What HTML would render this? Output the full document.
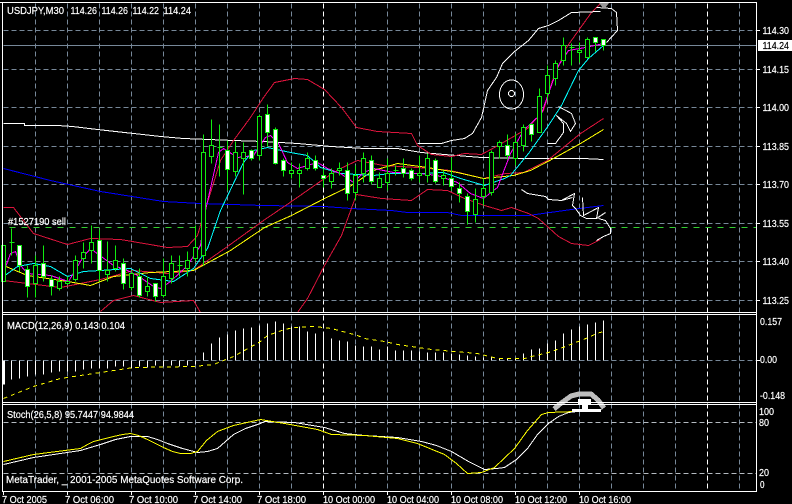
<!DOCTYPE html>
<html><head><meta charset="utf-8"><title>USDJPY,M30</title>
<style>
html,body{margin:0;padding:0;background:#000;width:792px;height:504px;overflow:hidden}
svg{display:block}
text{font-family:"Liberation Sans",sans-serif;font-size:10.5px;fill:#fff;stroke:#fff;stroke-width:.2}
path,polyline,ellipse,circle{fill:none}
polyline{stroke-linejoin:miter}
</style></head><body>
<svg width="792" height="504" viewBox="0 0 792 504" xmlns="http://www.w3.org/2000/svg">
<rect width="792" height="504" fill="#000"/>
<g transform="translate(.5,.5)" shape-rendering="crispEdges">
<!-- grid -->
<path stroke="#778899" stroke-dasharray="5 3" d="M35 3V491M67 3V491M99 3V491M131 3V491M163 3V491M195 3V491M227 3V491M259 3V491M291 3V491M355 3V491M387 3V491M419 3V491M451 3V491M483 3V491M515 3V491M547 3V491M579 3V491M611 3V491M643 3V491M675 3V491M739 3V491"/>
<path stroke="#fff" stroke-dasharray="5 3" d="M323 3V491M707 3V491"/>
<path stroke="#778899" stroke-dasharray="5 3" d="M3 30H756M3 69H756M3 107H756M3 146H756M3 184H756M3 223H756M3 261H756M3 300H756M3 360H756"/>
<path stroke="#b4bac0" stroke-dasharray="5 3" d="M3 422H756M3 473H756"/>
<path stroke="#778899" d="M3 45H756"/>
<path stroke="#32cd32" stroke-dasharray="6 6" d="M9 227H756"/>

<!-- indicators main -->
<polyline stroke="#fff" points="3,123 24,123 24,125 57,125 72,126 97,129 133,133 160,136 183,138 233,140 263,141 297,143 331,146 364,148 397,148 421,152 444,154 481,157 528,158 583,158 603,159"/>
<polyline stroke="#0000ff" points="3,168 50,180 100,191 163,201 200,203 263,205 324,206 351,208 391,210 407,212 447,212 461,215 528,215 571,209 603,205"/>
<polyline stroke="#dc143c" points="3,207 13,207 33,233 67,244 90,238 120,239 167,247 187,246 197,235 202,218 220,160 233,140 250,117 263,97 274,82 294,78 307,79 324,89 341,107 356,127 377,131 411,133 417,145 431,154 451,156 464,153 481,154 494,147 527,128 543,110 552,80 566,47 578,30 591,12 600,3"/>
<polyline stroke="#dc143c" points="100,311 113,300 133,295 160,302 193,300 200,312"/>
<polyline stroke="#dc143c" points="297,312 307,298 324,265 341,235 356,194 381,198 411,200 427,189 447,190 464,198 484,205 501,210 511,207 528,213 538,218 558,236 571,243 588,245 600,239"/>
<polyline stroke="#dc143c" points="3,280 27,283 60,287 100,279 133,270 167,273 193,270 227,246 263,220 291,201 324,178 340,168 357,160 383,165 417,167 450,170 483,178 505,173 523,172 547,160 580,133 603,118"/>
<polyline stroke="#ffff00" points="3,265 27,275 67,281 90,285 113,276 150,272 193,270 230,250 264,227 291,215 324,198 351,185 373,170 397,163 427,167 457,172 483,178 513,175 530,170 553,158 580,143 603,129"/>
<polyline stroke="#00ffff" points="3,276 17,266 33,263 50,266 67,276 83,271 100,270 130,268 150,278 173,281 193,268 207,248 220,210 243,162 253,150 267,147 290,152 307,155 320,167 340,173 373,175 390,173 420,173 443,172 460,178 484,185 504,178 510,175 528,153 548,125 561,105 578,70 588,58 603,45"/>
<polyline stroke="#ff00ff" points="3,272 10,253 15,251 20,265 27,273 50,275 68,281 83,256 90,248 113,265 127,270 137,275 153,286 160,288 170,281 187,265 200,245 205,210 218,152 223,148 237,157 253,155 265,137 270,135 278,143 287,162 297,168 317,162 327,168 340,173 353,182 363,172 373,168 393,172 420,173 437,175 457,182 470,193 483,198 493,190 497,187 510,153 523,130 541,113 548,93 558,65 568,50 585,47 603,43"/>

<!-- candle wicks -->
<path stroke="#10ec10" d="M11 228V255M19 245V271M27 265V297M35 255V297M43 245V281M51 275V295M59 276V290M67 276V284M75 255V281M83 242V268M91 225V263M99 229V281M107 241V281M115 245V271M123 258V289M131 270V290M139 268V297M147 276V296M155 283V301M163 258V297M171 255V283M179 255V276M187 251V276M195 225V261M203 134V265M211 119V163M219 124V176M227 140V190M235 141V176M243 142V194M251 149V160M259 114V160M267 104V146M275 127V164M283 158V176M291 162V178M299 163V187M307 152V170M315 155V170M323 168V187M331 168V188M339 162V175M347 162V200M355 165V200M363 152V182M371 155V184M379 172V187M387 158V190M395 165V175M403 158V177M411 168V180M419 155V182M427 153V182M435 158V183M443 170V185M451 157V190M459 182V202M467 193V224M475 188V222M483 178V205M491 150V195M499 140V158M507 134V159M515 133V165M523 124V151M531 123V141M539 88V132M547 65V100M555 60V85M563 37V65M571 43V65M579 42V62M587 37V58M595 37V51M603 39V50"/>
<!-- dojis -->
<path stroke="#10ec10" d="M9 242h5M177 265h5M217 147h5M393 170h5M569 47h5"/>
<!-- hollow bodies -->
<path stroke="#10ec10" style="fill:#000" d="M1 245h4V281H1zM33 265h4V283H33zM57 281h4V288H57zM65 281h4V283H65zM73 260h4V279H73zM81 252h4V258H81zM89 242h4V250H89zM105 270h4V274H105zM113 260h4V268H113zM129 273h4V287H129zM145 286h4V291H145zM161 276h4V295H161zM169 263h4V278H169zM185 260h4V268H185zM193 247h4V258H193zM201 152h4V255H201zM209 145h4V156H209zM233 152h4V171H233zM241 152h4V158H241zM257 116h4V155H257zM289 170h4V173H289zM297 170h4V173H297zM305 158h4V168H305zM329 173h4V181H329zM337 168h4V170H337zM353 175h4V192H353zM361 158h4V173H361zM377 178h4V187H377zM385 173h4V182H385zM417 173h4V175H417zM425 158h4V175H425zM441 175h4V178H441zM473 199h4V214H473zM481 188h4V196H481zM489 152h4V192H489zM497 142h4V146H497zM513 142h4V158H513zM521 127h4V145H521zM537 96h4V132H537zM545 75h4V93H545zM553 63h4V78H553zM561 45h4V60H561zM577 50h4V52H577zM585 39h4V57H585z"/>
<!-- white bodies -->
<path stroke="#10ec10" style="fill:#fff" d="M17 245h4V265H17zM25 269h4V286H25zM41 263h4V276H41zM49 279h4V286H49zM97 240h4V270H97zM121 263h4V283H121zM137 276h4V295H137zM153 283h4V296H153zM225 150h4V169H225zM249 150h4V158H249zM265 114h4V132H265zM273 129h4V163H273zM281 160h4V170H281zM313 160h4V168H313zM321 175h4V178H321zM345 170h4V193H345zM369 160h4V181H369zM401 168h4V173H401zM409 170h4V178H409zM433 160h4V181H433zM449 178h4V186H449zM457 188h4V193H457zM465 196h4V211H465zM505 145h4V155H505zM529 124h4V134H529zM593 37h4V42H593zM601 39h4V45H601z"/>

<!-- MACD bars -->
<path stroke="#fff" d="M3 360V384M4 360V384M11 360V379M19 360V378M27 360V376M35 360V374M43 360V374M51 360V372M59 360V371M67 360V371M75 360V371M83 360V369M91 360V368M99 360V368M107 360V368M115 360V366M123 360V366M131 360V368M139 360V366M147 360V367M155 360V365M163 360V366M171 360V365M179 360V366M187 360V365M195 360V364M203 360V352M211 360V343M219 360V337M227 360V334M235 360V330M243 360V328M251 360V327M259 360V325M267 360V323M275 360V321M283 360V323M291 360V326M299 360V326M307 360V331M315 360V333M323 360V335M331 360V338M339 360V340M347 360V341M355 360V345M363 360V346M371 360V346M379 360V349M387 360V346M395 360V350M403 360V350M411 360V350M419 360V351M427 360V352M435 360V352M443 360V352M451 360V353M459 360V354M467 360V355M475 360V356M483 360V357M491 360V357M499 360V358M507 360V358M515 360V358M523 360V353M531 360V349M539 360V348M547 360V343M555 360V340M563 360V333M571 360V329M579 360V326M587 360V324M595 360V322M603 360V320"/>
<polyline stroke="#ffff00" stroke-dasharray="4 4" points="3,398 33,386 60,378 100,372 133,367 193,366 213,364 233,356 260,341 267,335 284,329 294,327 314,326 331,328 357,335 364,338 384,341 397,344 431,349 477,353 497,358 524,358 531,356 548,352 565,346 588,337 596,333 603,331"/>

<!-- Stoch -->
<polyline stroke="#fff" points="3,464 33,457 80,450 100,444 115,439 130,436 147,436 157,439 167,443 182,448 197,452 207,451 217,448 225,441 233,434 245,428 260,423 264,421 294,422 324,427 344,433 364,435 397,437 421,441 436,445 451,451 468,461 484,469 496,468 504,467 516,459 527,448 537,434 548,423 558,416 568,412 585,410 601,409"/>
<polyline stroke="#ffff00" points="3,461 33,454 80,448 87,444 93,441 113,436 122,434 130,433 138,435 147,439 163,447 172,451 180,453 190,453 197,451 206,440 217,431 233,425 260,419 284,423 317,429 331,434 364,435 397,438 417,443 444,454 456,463 467,473 481,472 494,467 514,448 527,430 541,414 548,412 575,411 598,409"/>

<!-- hand-drawn shark -->
<polyline stroke="#fff" points="417,143 441,143 451,140 464,138 472,133 481,117 487,90 496,77 502,63 514,51 528,40 538,28 548,25 558,20 571,12 600,11"/>
<polyline stroke="#fff" points="596,7 611,8 616,12 617,30 606,42"/>
<ellipse stroke="#fff" cx="511" cy="94" rx="12" ry="14.5"/>
<circle stroke="#fff" cx="511" cy="93" r="3"/>
<polyline stroke="#fff" points="558,106 571,113 575,123 570,131 566,123 556,115 563,123 563,132 555,143 547,143"/>
<polyline stroke="#fff" points="521,189 527,193 545,196 548,199 561,200 574,193 572,205 575,208 580,215 586,218 596,218 598,207 583,215 582,197"/>
<polyline stroke="#fff" points="561,200 572,197"/>
<polyline stroke="#fff" points="596,218 605,212"/>
<polyline stroke="#fff" points="598,218 605,220 610,228 610,233 603,236 596,240"/>
</g>
<path d="M599 3h10l-4 5h-2z" style="fill:#999"/>

<g shape-rendering="crispEdges">
<path d="M554 409L560 404L571 396L579 394L591 394L598 400L604 408" stroke="#bdbdbd" stroke-width="5"/>
<path d="M578 399h13v6h-3v5h-6v-5h-4zM572 409h29v3h-29z" style="fill:#fff"/>
<!-- frame -->
<path stroke="#fff" d="M0 2.5H756.5M2.5 2V491.5M756.5 2V491.5M2 312.5H756M2 314.5H756M2 402.5H756M2 404.5H756M2 491.5H757"/>
<path stroke="#fff" d="M757 30.5h3M757 69.5h3M757 107.5h3M757 146.5h3M757 184.5h3M757 223.5h3M757 261.5h3M757 300.5h3M757 360.5h3"/>
<path stroke="#fff" d="M3.5 492v3M67.5 492v3M131.5 492v3M195.5 492v3M259.5 492v3M323.5 492v3M387.5 492v3M451.5 492v3M515.5 492v3M579.5 492v3"/>
<rect x="758" y="40" width="34" height="11" fill="#fff"/>
</g>

<text x="7" y="14" textLength="57" lengthAdjust="spacingAndGlyphs">USDJPY,M30</text>
<text x="70.5" y="14" textLength="26.5" lengthAdjust="spacingAndGlyphs">114.26</text>
<text x="101.5" y="14" textLength="26.5" lengthAdjust="spacingAndGlyphs">114.26</text>
<text x="132.5" y="14" textLength="26.5" lengthAdjust="spacingAndGlyphs">114.22</text>
<text x="163.5" y="14" textLength="27.5" lengthAdjust="spacingAndGlyphs">114.24</text>
<text x="8" y="225" textLength="58" lengthAdjust="spacingAndGlyphs">#1527190 sell</text>
<text x="7" y="329" textLength="118" lengthAdjust="spacingAndGlyphs">MACD(12,26,9) 0.143 0.104</text>
<text x="7" y="418" textLength="127" lengthAdjust="spacingAndGlyphs">Stoch(26,5,8) 95.7447 94.9844</text>
<text x="6" y="483" textLength="237" lengthAdjust="spacingAndGlyphs">MetaTrader, _ 2001-2005 MetaQuotes Software Corp.</text>

<text x="762.5" y="34" textLength="26.5" lengthAdjust="spacingAndGlyphs">114.30</text>
<text x="762.5" y="49" textLength="26.5" lengthAdjust="spacingAndGlyphs" style="fill:#000;stroke:#000">114.24</text>
<text x="762.5" y="73" textLength="26.5" lengthAdjust="spacingAndGlyphs">114.15</text>
<text x="762.5" y="111" textLength="26.5" lengthAdjust="spacingAndGlyphs">114.00</text>
<text x="762.5" y="150" textLength="26.5" lengthAdjust="spacingAndGlyphs">113.85</text>
<text x="762.5" y="188" textLength="26.5" lengthAdjust="spacingAndGlyphs">113.70</text>
<text x="762.5" y="227" textLength="26.5" lengthAdjust="spacingAndGlyphs">113.55</text>
<text x="762.5" y="265" textLength="26.5" lengthAdjust="spacingAndGlyphs">113.40</text>
<text x="762.5" y="304" textLength="26.5" lengthAdjust="spacingAndGlyphs">113.25</text>
<text x="760" y="325" textLength="22" lengthAdjust="spacingAndGlyphs">0.157</text>
<text x="760" y="363" textLength="17" lengthAdjust="spacingAndGlyphs">0.00</text>
<text x="760" y="399" textLength="25" lengthAdjust="spacingAndGlyphs">-0.148</text>
<text x="759" y="415" textLength="15" lengthAdjust="spacingAndGlyphs">100</text>
<text x="759" y="426" textLength="10" lengthAdjust="spacingAndGlyphs">80</text>
<text x="759" y="476" textLength="10" lengthAdjust="spacingAndGlyphs">20</text>
<text x="760" y="488" textLength="4.5" lengthAdjust="spacingAndGlyphs">0</text>

<text x="2" y="503" textLength="45" lengthAdjust="spacingAndGlyphs">7 Oct 2005</text>
<text x="65" y="503" textLength="49" lengthAdjust="spacingAndGlyphs">7 Oct 06:00</text>
<text x="129" y="503" textLength="49" lengthAdjust="spacingAndGlyphs">7 Oct 10:00</text>
<text x="193" y="503" textLength="49" lengthAdjust="spacingAndGlyphs">7 Oct 14:00</text>
<text x="257" y="503" textLength="49" lengthAdjust="spacingAndGlyphs">7 Oct 18:00</text>
<text x="323" y="503" textLength="52" lengthAdjust="spacingAndGlyphs">10 Oct 00:00</text>
<text x="387" y="503" textLength="52" lengthAdjust="spacingAndGlyphs">10 Oct 04:00</text>
<text x="451" y="503" textLength="52" lengthAdjust="spacingAndGlyphs">10 Oct 08:00</text>
<text x="515" y="503" textLength="52" lengthAdjust="spacingAndGlyphs">10 Oct 12:00</text>
<text x="579" y="503" textLength="52" lengthAdjust="spacingAndGlyphs">10 Oct 16:00</text>
</svg>
</body></html>
